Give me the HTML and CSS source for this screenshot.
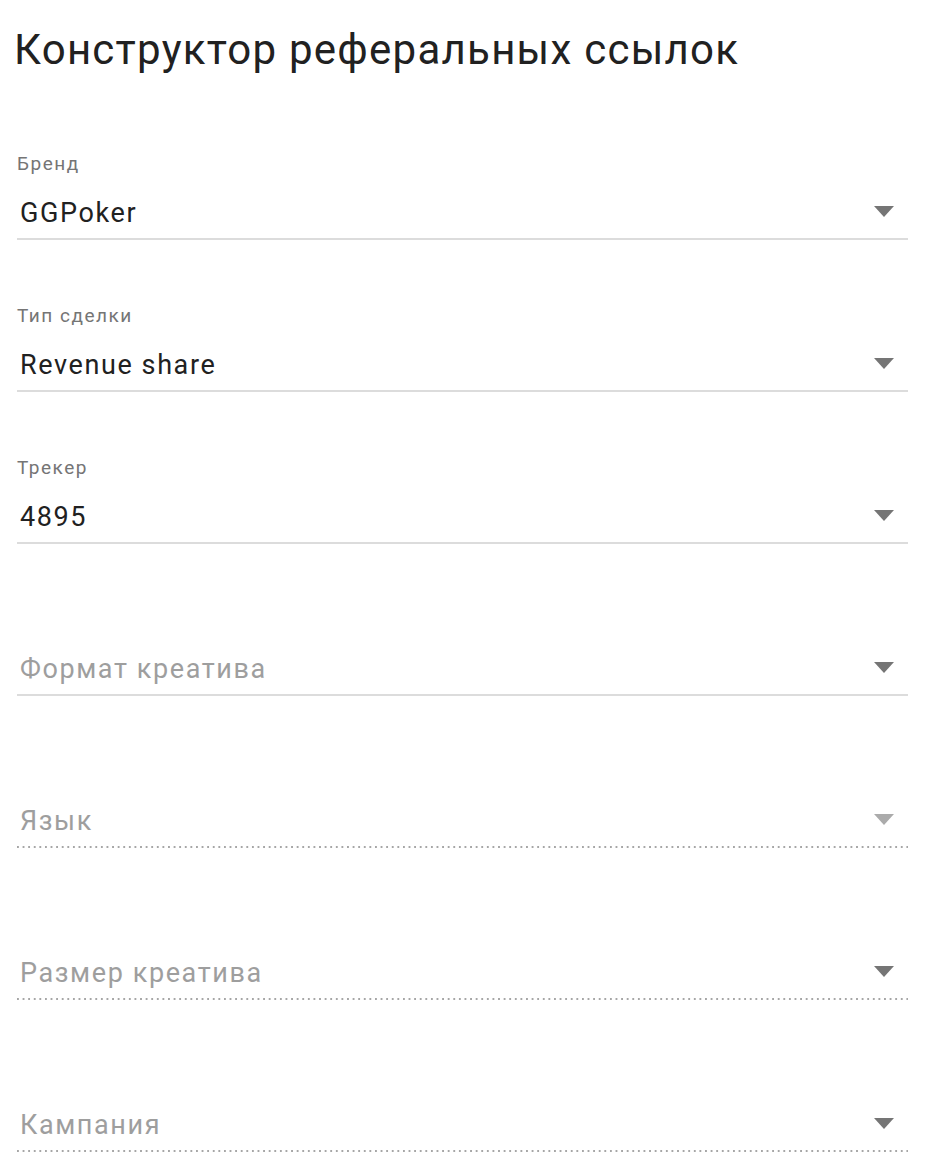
FILE: index.html
```html
<!DOCTYPE html>
<html lang="ru">
<head>
  <meta charset="UTF-8" />
  <meta name="viewport" content="width=device-width, initial-scale=1.0"/>
  <title>Конструктор реферальных ссылок</title>
  <link rel="stylesheet" href="styles.css">
</head>
<body>
  <h1>Конструктор реферальных ссылок</h1>

  <div class="form">
    <div class="field">
      <div class="label">Бренд</div>
      <div class="control">
        <span class="value">GGPoker</span>
        <span class="arrow"></span>
      </div>
    </div>

    <div class="field">
      <div class="label">Тип сделки</div>
      <div class="control">
        <span class="value">Revenue share</span>
        <span class="arrow"></span>
      </div>
    </div>

    <div class="field">
      <div class="label">Трекер</div>
      <div class="control">
        <span class="value">4895</span>
        <span class="arrow"></span>
      </div>
    </div>

    <div class="field">
      <div class="label"></div>
      <div class="control">
        <span class="value placeholder">Формат креатива</span>
        <span class="arrow"></span>
      </div>
    </div>

    <div class="field disabled">
      <div class="label"></div>
      <div class="control">
        <span class="value placeholder">Язык</span>
        <span class="arrow light"></span>
      </div>
    </div>

    <div class="field disabled">
      <div class="label"></div>
      <div class="control">
        <span class="value placeholder">Размер креатива</span>
        <span class="arrow"></span>
      </div>
    </div>

    <div class="field disabled">
      <div class="label"></div>
      <div class="control">
        <span class="value placeholder">Кампания</span>
        <span class="arrow"></span>
      </div>
    </div>
  </div>
</body>
</html>
```

FILE: styles.css
```css
body { margin: 0; padding: 0 30px 0 17px; font-family: Roboto, "Noto Sans", sans-serif; background: #fff; color: #212121; }
h1 { margin: 0; padding-top: 25px; font-size: 42px; line-height: 50px; font-weight: 400; margin-left: -3px; letter-spacing: 1.25px; }
.form { margin-top: 79px; }
.field { margin-bottom: 66px; }
.label { height: 20px; font-size: 19px; line-height: 20px; color: #757575; letter-spacing: 1.5px; }
.control { display: flex; align-items: center; margin-top: 23px; padding: 0 14px 9px 3px; border-bottom: 2px solid #dcdcdc; }
.value { flex: 1; font-size: 27px; line-height: 32px; letter-spacing: 1.6px; }
.placeholder { color: #9e9e9e; }
.arrow { width: 0; height: 0; border-left: 10px solid transparent; border-right: 10px solid transparent; border-top: 11px solid #757575; margin-top: -4px; }
.arrow.light { border-top-color: #ababab; }
.disabled .control { border-bottom: none; padding-bottom: 11px; background-image: linear-gradient(to right, #a6a6a6 2px, transparent 2px); background-size: 5.6px 2px; background-repeat: repeat-x; background-position: left bottom; }
```
